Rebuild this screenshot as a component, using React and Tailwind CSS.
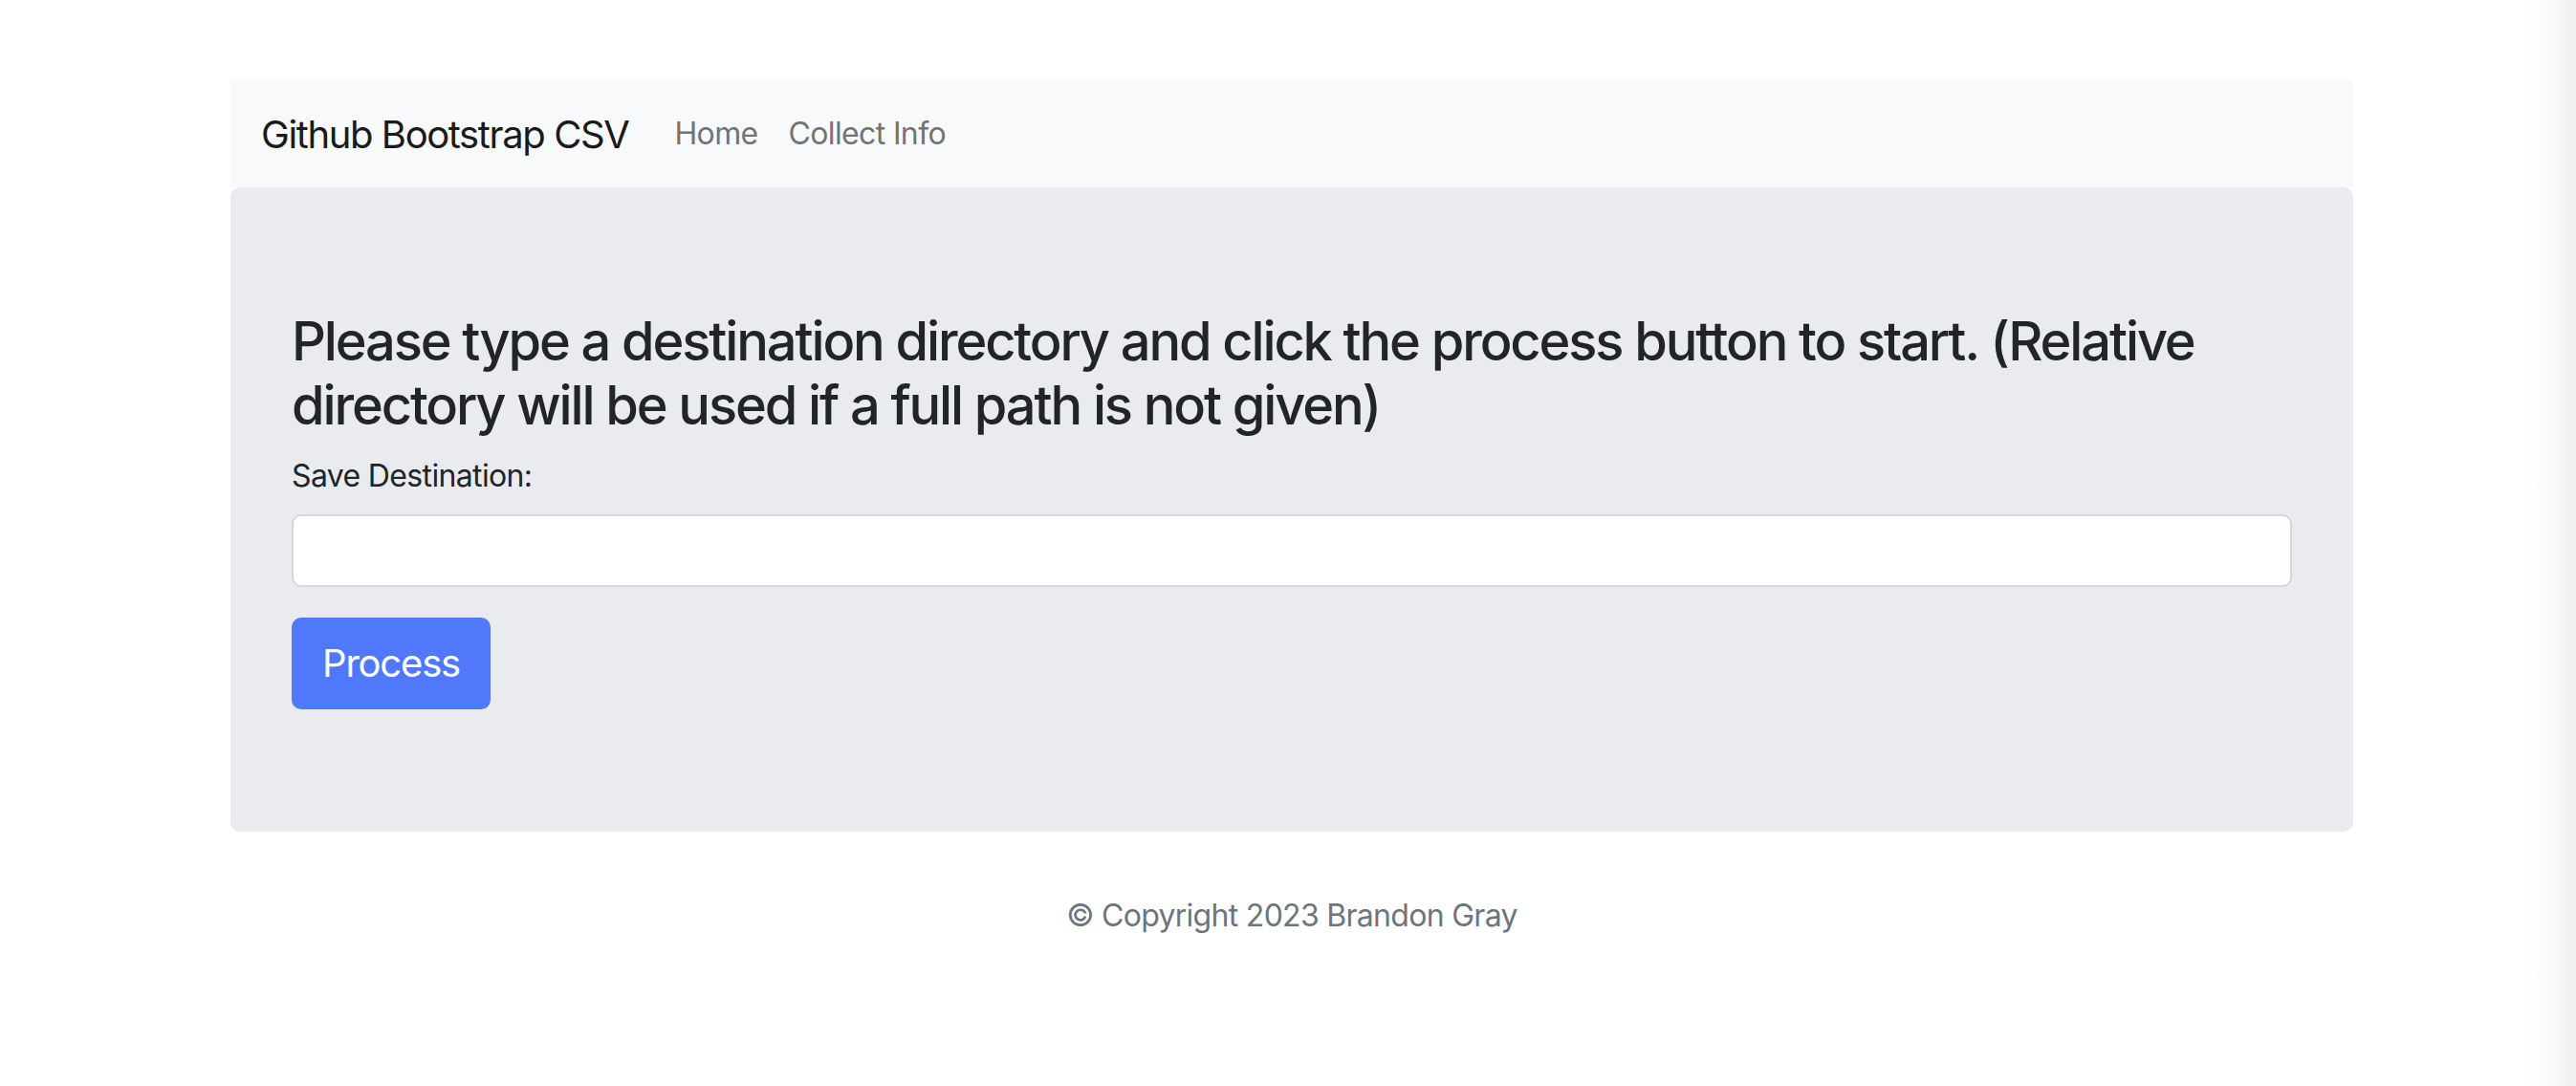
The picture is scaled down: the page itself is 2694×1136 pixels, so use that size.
import React from "react";

const font = { fontFamily: "Inter, 'Noto Sans', 'Liberation Sans', sans-serif" };

const NavLink = ({ children }) => (
  <a href="#" className="px-[16px] text-[32px] leading-[48px] tracking-[-0.02em] text-[#737373]">
    {children}
  </a>
);

const App = () => {
  return (
    <div className="flex min-h-screen bg-white" style={font}>
      <div className="flex-1 pl-[241px] pt-[84px]">
        <div className="w-[2220px]">
          <nav className="flex h-[112px] items-center bg-[#f8f9fa] px-[32px]">
            <span className="mr-[32px] pt-[2px] text-[40px] leading-[60px] tracking-[-0.035em] text-[#1a1a1a]">
              Github Bootstrap CSV
            </span>
            <NavLink>Home</NavLink>
            <NavLink>Collect Info</NavLink>
          </nav>

          <div className="rounded-[10px] bg-[#e9ebef] px-[64px] py-[128px]">
            <h3 className="mb-[16px] text-[56px] font-medium leading-[1.2] tracking-[-0.038em] text-[#212529]">
              Please type a destination directory and click the process button
              to start. (Relative directory will be used if a full path is not
              given)
            </h3>
            <label className="mb-[16px] block text-[32px] leading-[48px] tracking-[-0.02em] text-[#212529]">
              Save Destination:
            </label>
            <input
              type="text"
              className="block h-[76px] w-full rounded-[10px] border-2 border-[#d5d7dc] bg-white px-[24px] text-[32px] outline-none"
            />
            <button className="mt-[32px] h-[96px] w-[208px] rounded-[10px] bg-[#5078fa] text-center text-[40px] tracking-[-0.03em] text-white">
              Process
            </button>
          </div>

          <footer className="mt-[64px] text-center text-[32px] leading-[48px] tracking-[-0.022em] text-[#6c757d]">
            © Copyright 2023 Brandon Gray
          </footer>
        </div>
      </div>
      <div className="w-[54px] bg-linear-to-r from-white via-[#fbfbfb] to-[#eeeeee]" />
    </div>
  );
};

export default App;
